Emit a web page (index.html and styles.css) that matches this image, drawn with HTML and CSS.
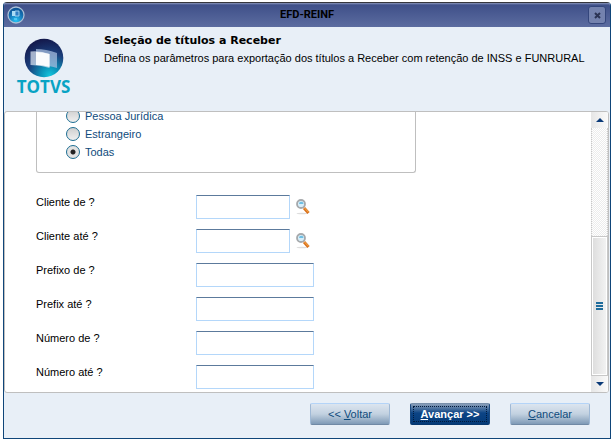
FILE: index.html
```html
<!DOCTYPE html>
<html lang="pt-BR">

<head>
	<meta charset="utf-8">
	<title>EFD-REINF</title>
	<link rel="stylesheet" href="styles.css">
</head>
<body>

	<div class="window">
		<header class="titlebar">
			<svg class="app-icon" width="18" height="18" viewBox="0 0 18 18">
				<defs>
					<radialGradient id="app" cx="50%" cy="85%" r="75%">
						<stop offset="0" stop-color="#25c4f4"/>
						<stop offset="0.6" stop-color="#1676b8"/>
						<stop offset="1" stop-color="#0f5596"/>
					</radialGradient>
				</defs>
				<circle cx="9" cy="9" r="8" fill="url(#app)" stroke="#a9bfd6" stroke-width="1.3"/>
				<rect x="5" y="5" width="3" height="5" fill="#a8dcf5"/>
				<path d="M8 5h4v5H8z" fill="#2f7fc4" stroke="#b9def5" stroke-width="0.8"/>
				<path d="M7 13h3" stroke="#7fdcff"/>
			</svg>
			<h1>EFD-REINF</h1>
			<button class="close" type="button" aria-label="Fechar">
				<svg width="7" height="7" viewBox="0 0 7 7"><path d="M1 1l5 5M6 1L1 6" stroke="#2b3354" stroke-width="2"/></svg>
			</button>
		</header>

		<section class="intro">
			<div class="logo">
				<svg width="40" height="40" viewBox="0 0 40 40">
					<defs>
						<radialGradient id="ball" cx="65%" cy="95%" r="95%">
							<stop offset="0" stop-color="#14c4dc"/>
							<stop offset="0.25" stop-color="#0c92b8"/>
							<stop offset="0.6" stop-color="#1b3f7c"/>
							<stop offset="1" stop-color="#14194c"/>
						</radialGradient>
					</defs>
					<circle cx="20" cy="20" r="19.3" fill="url(#ball)"/>
					<path d="M12 11q10 0 21 4v15q-9-3-21-3z" fill="#a4bbdc" opacity="0.75"/>
					<path d="M6.500 13.500q10-1 19 2.500v14q-9-3-19-3z" fill="#dfe8f4" opacity="0.7"/>
					<path d="M12 14q6 0 13.500 2v13q-6-2-13.500-2z" fill="#fff" opacity="0.9"/>
				</svg>
				<strong>TOTVS</strong>
			</div>
			<div class="intro-text">
				<h2>Seleção de títulos a Receber</h2>
				<p>Defina os parâmetros para exportação dos títulos a Receber com retenção de INSS e FUNRURAL</p>
			</div>
		</section>

		<main class="panel">
			<form class="params" id="params">
				<fieldset class="group">
					<label><input type="radio" name="pessoa">Pessoa Jurídica</label>
					<label><input type="radio" name="pessoa">Estrangeiro</label>
					<label><input type="radio" name="pessoa" checked>Todas</label>
				</fieldset>

				<div class="row">
					<label for="cliente_de">Cliente de ?</label>
					<input class="short" type="text" id="cliente_de">
					<button class="lookup" type="button" aria-label="Pesquisar">
						<svg width="14" height="16" viewBox="0 0 14 16">
							<ellipse cx="6" cy="14.5" rx="5.5" ry="0.8" fill="#ddd"/>
							<path d="M8 9l4.500 5" stroke="#d9701c" stroke-width="3"/>
							<path d="M8.500 9l4 4.200" stroke="#f8b04e" stroke-width="1"/>
							<circle cx="5" cy="5" r="4" fill="#d6eefa" stroke="#a6a9ac" stroke-width="1.800"/>
							<path d="M3 5a2 2 0 0 1 4.500 0z" fill="#6fbfe4"/>
						</svg>
					</button>
				</div>
				<div class="row">
					<label for="cliente_ate">Cliente até ?</label>
					<input class="short" type="text" id="cliente_ate">
					<button class="lookup" type="button" aria-label="Pesquisar">
						<svg width="14" height="16" viewBox="0 0 14 16">
							<ellipse cx="6" cy="14.5" rx="5.5" ry="0.8" fill="#ddd"/>
							<path d="M8 9l4.500 5" stroke="#d9701c" stroke-width="3"/>
							<path d="M8.500 9l4 4.200" stroke="#f8b04e" stroke-width="1"/>
							<circle cx="5" cy="5" r="4" fill="#d6eefa" stroke="#a6a9ac" stroke-width="1.800"/>
							<path d="M3 5a2 2 0 0 1 4.500 0z" fill="#6fbfe4"/>
						</svg>
					</button>
				</div>
				<div class="row">
					<label for="prefixo_de">Prefixo de ?</label>
					<input type="text" id="prefixo_de">
				</div>
				<div class="row">
					<label for="prefixo_ate">Prefix até ?</label>
					<input type="text" id="prefixo_ate">
				</div>
				<div class="row">
					<label for="numero_de">Número de ?</label>
					<input type="text" id="numero_de">
				</div>
				<div class="row">
					<label for="numero_ate">Número até ?</label>
					<input type="text" id="numero_ate">
				</div>
			</form>

			<div class="scrollbar">
				<button class="arrow" type="button" aria-label="Subir">
					<svg width="8" height="4" viewBox="0 0 8 4"><path d="M0 4l4-4 4 4z" fill="#0a3a78"/></svg>
				</button>
				<div class="track"></div>
				<div class="thumb"><i></i><i></i><i></i></div>
				<button class="arrow" type="button" aria-label="Descer">
					<svg width="8" height="4" viewBox="0 0 8 4"><path d="M0 0l4 4 4-4z" fill="#0a3a78"/></svg>
				</button>
			</div>
		</main>

		<footer class="actions">
			<button class="btn" type="button">&lt;&lt; <u>V</u>oltar</button>
			<button class="btn primary" type="submit" form="params"><u>A</u>vançar &gt;&gt;</button>
			<button class="btn" type="button"><u>C</u>ancelar</button>
		</footer>
	</div>

</body>
</html>
```

FILE: styles.css
```css
* {
box-sizing: border-box;
}

body {
margin: 0;
padding: 2px 3px 6px;
min-height: 100vh;
display: flex;
background: #fff;
color: #000;
font-family: "Liberation Sans", Arial, sans-serif;
font-size: 11px;
line-height: 14px;
}

h1, h2, p {
margin: 0;
}

button, input {
font: inherit;
margin: 0;
}

.window {
flex: 1;
display: flex;
flex-direction: column;
border: 1px solid #0f4579;
border-top: 0;
border-radius: 4px 4px 0 0;
background: #e8eff7;
overflow: hidden;
}

/* title bar */
.titlebar {
display: grid;
grid-template-columns: 22px 1fr 22px;
align-items: center;
height: 25px;
border-top: 1px solid #36373d;
background: linear-gradient(#8a96bd, #3f5089 2px, #5c6ca0);
}

.titlebar h1 {
text-align: center;
font-family: Roboto, sans-serif;
font-size: 11px;
line-height: 14px;
}

.app-icon {
margin-left: 3px;
}

.close {
display: flex;
align-items: center;
justify-content: center;
width: 18px;
height: 18px;
padding: 0;
border: 1px solid #34467c;
border-radius: 3px;
background: #7482ae;
}

/* heading */
.intro {
display: flex;
height: 84px;
}

.logo {
display: flex;
flex-direction: column;
align-items: center;
width: 79px;
padding-top: 11px;
}

.logo strong {
color: #08a3c4;
font-family: "Open Sans", sans-serif;
font-size: 17px;
line-height: 18px;
}

.intro-text {
padding: 7px 0 0 21px;
}

.intro-text h2 {
font-family: "DejaVu Sans", Verdana, sans-serif;
font-size: 11px;
line-height: 14px;
}

.intro-text p {
margin-top: 3px;
}

/* parameters, scrolled to the end */
.panel {
flex: 1 0 280px;
height: 280px;
display: flex;
margin-right: 1px;
border: 1px solid #bfbfbf;
border-radius: 3px;
background: #fff;
overflow: hidden;
}

.params {
flex: 1;
display: flex;
flex-direction: column;
justify-content: flex-end;
gap: 10px;
padding: 0 12px 3px 31px;
}

.group {
flex-shrink: 0;
display: flex;
flex-direction: column;
width: 100%;
max-width: 380px;
margin: 0 0 12px;
padding: 0 29px 11px;
border: 1px solid #bfbfbf;
border-top: 0;
border-radius: 0 0 3px 3px;
}

.group label {
display: flex;
align-items: center;
gap: 5px;
height: 18px;
color: #0f4b7c;
}

.group input {
appearance: none;
width: 14px;
height: 14px;
border: 1px solid #1c6d92;
border-radius: 50%;
background: linear-gradient(#cfcfcf, #f0f0f0);
}

.group input:checked {
background: radial-gradient(circle, #222 2px, #e2e2e2 3px);
}

.row {
flex-shrink: 0;
display: flex;
height: 24px;
}

.row label {
width: 160px;
}

.row input {
width: 118px;
padding: 2px 4px;
border: 1px solid #b4d7fa;
border-top-color: #5c7a9c;
background: #fff;
}

.row .short {
width: 94px;
}

.lookup {
display: flex;
padding: 4px 6px;
border: 0;
background: none;
}

/* scroll bar */
.scrollbar {
display: flex;
flex-direction: column;
width: 17px;
background: #f4f4f4;
}

.arrow {
display: flex;
align-items: center;
justify-content: center;
height: 16px;
padding: 0;
border: 0;
background: linear-gradient(90deg, #e6e6e6, #fafafa);
}

.track {
flex: 1;
border: 1px dotted #c8c8c8;
border-width: 0 1px;
background: repeating-conic-gradient(#ececec 0 25%, #fff 0 50%) 0 0 / 2px 2px;
}

.thumb {
display: flex;
flex-direction: column;
align-items: center;
justify-content: center;
gap: 1px;
height: 140px;
border: 1px solid #c8c8c8;
box-shadow: inset 0 0 0 1px #fff;
background: linear-gradient(90deg, #dcdcdc, #f4f4f4);
}

.thumb i {
width: 7px;
height: 2px;
background: #1f6c9c;
}

/* buttons */
.actions {
display: flex;
justify-content: flex-end;
gap: 20px;
padding: 10px 20px 13px;
}

.btn {
width: 80px;
height: 22px;
padding: 0;
border: 1px solid #9fb9d6;
border-top-color: #b4d4f8;
border-bottom-color: #7089a5;
border-radius: 2px;
background: linear-gradient(#dce5ef, #c2d1e0 50%, #7f9ab7);
color: #0f4b7c;
}

.primary {
border-color: #7890ac #1b4a80 #06376f;
background: linear-gradient(#8ba0ba, #0c4485 45%, #043a78);
color: #fff;
font-weight: bold;
outline: 1px dotted #001a3c;
outline-offset: -4px;
}
```
